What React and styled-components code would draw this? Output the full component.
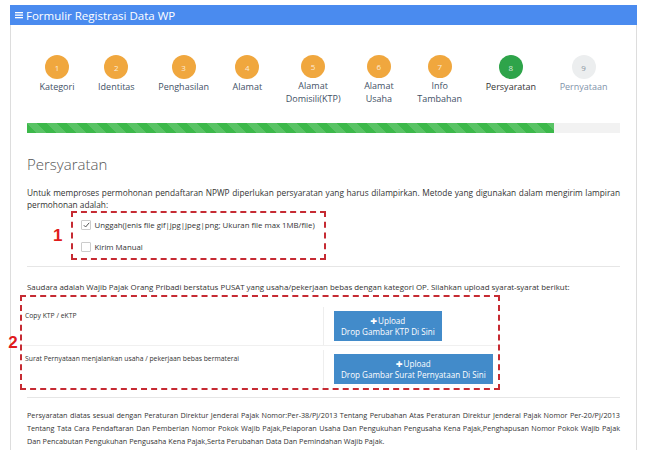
import React from 'react';
import styled, { createGlobalStyle } from 'styled-components';

const GlobalStyle = createGlobalStyle`
    body {
        margin: 0;
        background: #fff;
        font-family: "Open Sans", "DejaVu Sans", sans-serif;
        color: #333;
    }
`;

const steps = [
    { id: 1, label: ['Kategori'], state: 'done' },
    { id: 2, label: ['Identitas'], state: 'done' },
    { id: 3, label: ['Penghasilan'], state: 'done' },
    { id: 4, label: ['Alamat'], state: 'done' },
    { id: 5, label: ['Alamat', 'Domisili(KTP)'], state: 'done' },
    { id: 6, label: ['Alamat', 'Usaha'], state: 'done' },
    { id: 7, label: ['Info', 'Tambahan'], state: 'done' },
    { id: 8, label: ['Persyaratan'], state: 'active' },
    { id: 9, label: ['Pernyataan'], state: 'todo' },
];

const uploads = [
    { id: 1, title: 'Copy KTP / eKTP', button: 'Drop Gambar KTP Di Sini' },
    { id: 2, title: 'Surat Pernyataan menjalankan usaha / pekerjaan bebas bermaterai', button: 'Drop Gambar Surat Pernyataan Di Sini' },
];

function MenuIcon() {
    return (
        <svg width="8" height="8" viewBox="0 0 8 8">
            <rect x="0" y="1" width="8" height="1.3" fill="#fff" />
            <rect x="0" y="3.5" width="8" height="1.3" fill="#fff" />
            <rect x="0" y="6" width="8" height="1.3" fill="#fff" />
        </svg>
    );
}

export default function App() {
    return (
        <Page>
            <GlobalStyle />
            <Panel>
                <Header>
                    <MenuIcon />
                    <span>Formulir Registrasi Data WP</span>
                </Header>
                <Body>
                    <Steps>
                        {steps.map((s) => (
                            <Step key={s.id}>
                                <Circle state={s.state}>{s.id}</Circle>
                                <StepLabel state={s.state}>
                                    {s.label.map((l) => <div key={l}>{l}</div>)}
                                </StepLabel>
                            </Step>
                        ))}
                    </Steps>

                    <Progress>
                        <ProgressFill style={{ width: `${(8 / 9) * 100}%` }} />
                    </Progress>

                    <Heading>Persyaratan</Heading>
                    <Paragraph top={13}>
                        Untuk memproses permohonan pendaftaran NPWP diperlukan persyaratan yang harus dilampirkan. Metode yang digunakan dalam mengirim lampiran permohonan adalah:
                    </Paragraph>

                    <MarkedRow>
                        <Marker>1</Marker>
                        <MethodBox>
                            <CheckRow>
                                <Check>
                                    <svg width="7" height="6" viewBox="0 0 7 6">
                                        <path d="M0.8 3.2 L2.6 5 L6.2 0.8" fill="none" stroke="#555" strokeWidth="1" />
                                    </svg>
                                </Check>
                                Unggah(Jenis file gif|jpg|jpeg|png; Ukuran file max 1MB/file)
                            </CheckRow>
                            <CheckRow>
                                <Check />
                                Kirim Manual
                            </CheckRow>
                        </MethodBox>
                    </MarkedRow>

                    <Rule />

                    <Paragraph top={14} small>
                        Saudara adalah Wajib Pajak Orang Pribadi berstatus PUSAT yang usaha/pekerjaan bebas dengan kategori OP. Silahkan upload syarat-syarat berikut:
                    </Paragraph>

                    <UploadWrap>
                        <Marker2>2</Marker2>
                        <UploadBox>
                            {uploads.map((u) => (
                                <UploadRow key={u.id} first={u.id === 1}>
                                    <UploadTitle>{u.title}</UploadTitle>
                                    <UploadCell>
                                        <UploadButton>
                                            <div><Plus>✚</Plus>Upload</div>
                                            <div>{u.button}</div>
                                        </UploadButton>
                                    </UploadCell>
                                </UploadRow>
                            ))}
                        </UploadBox>
                    </UploadWrap>

                    <Rule top={7} />

                    <Footer>
                        Persyaratan diatas sesuai dengan Peraturan Direktur Jenderal Pajak <NoWrap>Nomor:Per-38/Pj/2013</NoWrap> Tentang Perubahan Atas Peraturan Direktur Jenderal Pajak Nomor <NoWrap>Per-20/Pj/2013</NoWrap> Tentang Tata Cara Pendaftaran Dan Pemberian Nomor Pokok Wajib Pajak,Pelaporan Usaha Dan Pengukuhan Pengusaha Kena Pajak,Penghapusan Nomor Pokok Wajib Pajak Dan Pencabutan Pengukuhan Pengusaha Kena Pajak,Serta Perubahan Data Dan Pemindahan Wajib Pajak.
                    </Footer>
                </Body>
            </Panel>
        </Page>
    );
}

const Page = styled.div`
    padding: 5px 13px 0 10px;
    width: 627px;
    height: 445px;
    overflow: hidden;
`;

const Panel = styled.div`
    border-left: 1px solid #ddd;
    border-right: 1px solid #ddd;
    height: 100%;
    box-sizing: border-box;
`;

const Header = styled.div`
    display: flex;
    align-items: center;
    gap: 3px;
    height: 20px;
    margin: 0 -1px;
    padding-left: 5px;
    background: #4a8bef;
    color: #fff;
    font-size: 11.5px;
`;

const Body = styled.div`
    padding: 0 16px;
`;

const Steps = styled.div`
    display: flex;
    justify-content: center;
    gap: 23.6px;
    padding-top: 30px;
    height: 80px;
    box-sizing: border-box;
`;

const Step = styled.div`
    display: flex;
    flex-direction: column;
    align-items: center;
`;

const Circle = styled.div`
    width: 24px;
    height: 24px;
    border-radius: 50%;
    display: flex;
    align-items: center;
    justify-content: center;
    font-size: 8px;
    color: ${(p) => (p.state === 'todo' ? '#8a94a0' : 'rgba(255,255,255,0.8)')};
    background: ${(p) => (p.state === 'done' ? '#f0a73e' : p.state === 'active' ? '#2ea44a' : '#eceeef')};
`;

const StepLabel = styled.div`
    margin-top: 1px;
    font-size: 9px;
    line-height: 13px;
    text-align: center;
    white-space: nowrap;
    color: ${(p) => (p.state === 'todo' ? '#7f93aa' : p.state === 'active' ? '#333' : '#3f5166')};
`;

const Progress = styled.div`
    margin-top: 18px;
    height: 10px;
    background: #f2f2f2;
`;

const ProgressFill = styled.div`
    height: 100%;
    background-color: #3cb84a;
    background-image: linear-gradient(
        45deg,
        rgba(255,255,255,0.15) 25%, transparent 25%,
        transparent 50%, rgba(255,255,255,0.15) 50%,
        rgba(255,255,255,0.15) 75%, transparent 75%, transparent
    );
    background-size: 20px 20px;
`;

const Heading = styled.h3`
    margin: 21px 0 0;
    font-size: 15px;
    font-weight: 300;
    color: #555;
    line-height: 20px;
`;

const Paragraph = styled.p`
    margin: ${(p) => p.top}px 0 0;
    font-size: ${(p) => (p.small ? 7.9 : 8.3)}px;
    line-height: 12px;
    text-align: justify;
    color: #333;
`;

const MarkedRow = styled.div`
    display: flex;
    align-items: center;
    gap: 9px;
    padding-left: 26px;
`;

const Marker = styled.div`
    color: #e01b1b;
    font-family: "Liberation Sans", Arial, sans-serif;
    font-weight: bold;
    font-size: 17px;
`;

const MethodBox = styled.div`
    width: 255px;
    box-sizing: border-box;
    border: 2px dashed #c62b33;
    padding: 6px 0 6px 8px;
    display: flex;
    flex-direction: column;
    gap: 11px;
`;

const CheckRow = styled.div`
    display: flex;
    align-items: center;
    gap: 3px;
    height: 11px;
    font-size: 7.8px;
    color: #333;
`;

const Check = styled.span`
    width: 8px;
    height: 8px;
    border: 1px solid #ccc;
    border-radius: 1px;
    display: inline-flex;
    align-items: center;
    justify-content: center;
    background: #fff;
`;

const Rule = styled.hr`
    border: none;
    border-top: 1px solid #e6e6e6;
    margin: ${(p) => (p.top ? p.top : 6)}px 0 0;
`;

const UploadWrap = styled.div`
    display: flex;
    align-items: center;
    margin-left: -21px;
    margin-top: 2px;
`;

const Marker2 = styled(Marker)`
    width: 14px;
    text-align: center;
`;

const UploadBox = styled.div`
    width: 480px;
    box-sizing: border-box;
    border: 2px dashed #c62b33;
    display: flex;
    flex-direction: column;
    padding-top: 10px;
`;

const UploadRow = styled.div`
    display: flex;
    border-top: ${(p) => (p.first ? 'none' : '1px solid #f0f0f0')};
    padding-top: ${(p) => (p.first ? 0 : 4)}px;
`;

const UploadTitle = styled.div`
    flex: 0 0 301px;
    padding: 4px 0 0 3px;
    box-sizing: border-box;
    font-size: 6.8px;
    color: #333;
`;

const UploadCell = styled.div`
    border-left: 1px solid #eee;
    padding: 0 10px 4px;
`;

const UploadButton = styled.div`
    display: inline-flex;
    flex-direction: column;
    align-items: center;
    justify-content: center;
    padding: 0 7px;
    height: 30px;
    background: #428bca;
    color: #fff;
    font-size: 8.1px;
    line-height: 11px;
    white-space: nowrap;
`;

const Plus = styled.span`
    font-size: 8px;
    margin-right: 1px;
`;

const Footer = styled.p`
    margin: 11px 0 0;
    font-size: 7.25px;
    line-height: 13px;
    text-align: justify;
    color: #333;
`;

const NoWrap = styled.span`
    white-space: nowrap;
`;
